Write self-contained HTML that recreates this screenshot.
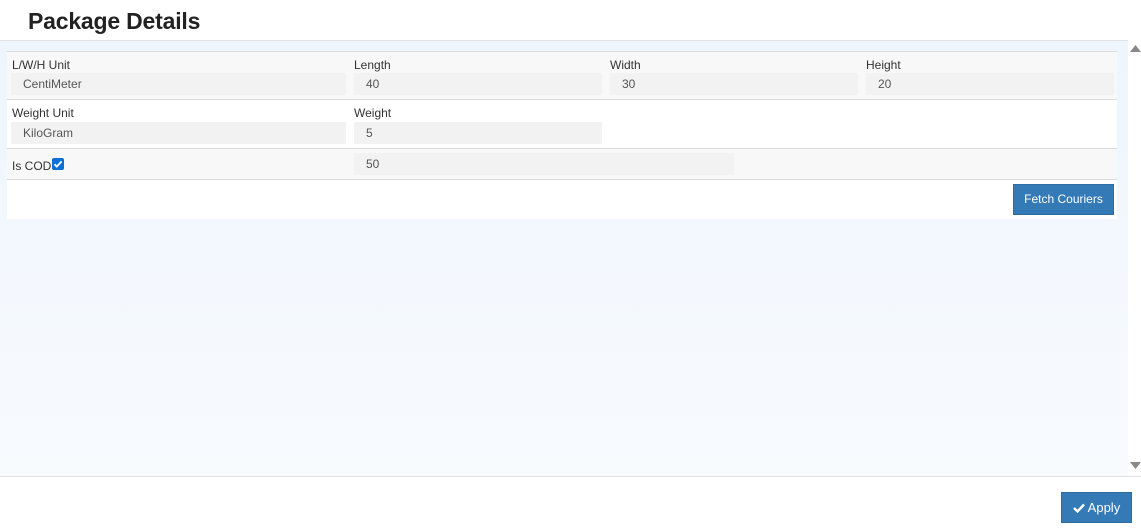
<!DOCTYPE html>
<html><head><style>
*{box-sizing:border-box;margin:0;padding:0}
body{width:1141px;height:531px;position:relative;background:#fff;font-family:"Liberation Sans",sans-serif;font-size:12px;color:#333;overflow:hidden}
.a{position:absolute}
h1{position:absolute;left:28px;top:8px;font-size:23px;font-weight:bold;color:#222;letter-spacing:-0.2px}
.scroll{left:0;top:40px;width:1128px;height:436px;border-top:1px solid #e3e3e3;background:linear-gradient(#eef5fd,#f8fbfe)}
.row{left:7px;width:1110px}
.lbl{position:absolute;font-size:12px;color:#333}
.inp{position:absolute;height:22px;background:#f2f2f2;color:#555;padding-left:12px;line-height:23px}
.btn{position:absolute;background:#337ab7;border:1px solid #2e6da4;color:#fff;text-align:center;font-size:12px}
</style></head><body>
<h1>Package Details</h1>
<div class="a scroll"></div>
<div class="a row" style="top:51px;height:48px;background:#f8f8f8;border-top:1px solid #dcdcdc"></div>
<div class="a row" style="top:99px;height:49px;background:#fff;border-top:1px solid #dcdcdc"></div>
<div class="a row" style="top:148px;height:31px;background:#f8f8f8;border-top:1px solid #dcdcdc"></div>
<div class="a row" style="top:179px;height:40px;background:#fff;border-top:1px solid #dcdcdc"></div>

<div class="lbl" style="left:12px;top:58px">L/W/H Unit</div>
<div class="inp" style="left:11px;top:73px;width:335px">CentiMeter</div>
<div class="lbl" style="left:354px;top:58px">Length</div>
<div class="inp" style="left:354px;top:73px;width:248px">40</div>
<div class="lbl" style="left:610px;top:58px">Width</div>
<div class="inp" style="left:610px;top:73px;width:248px">30</div>
<div class="lbl" style="left:866px;top:58px">Height</div>
<div class="inp" style="left:866px;top:73px;width:248px">20</div>

<div class="lbl" style="left:12px;top:106px">Weight Unit</div>
<div class="inp" style="left:11px;top:122px;width:335px">KiloGram</div>
<div class="lbl" style="left:354px;top:106px">Weight</div>
<div class="inp" style="left:354px;top:122px;width:248px">5</div>

<div class="lbl" style="left:12px;top:159px">Is COD</div>
<svg class="a" style="left:52px;top:158px" width="12" height="12" viewBox="0 0 12 12"><rect width="12" height="12" rx="2" fill="#0b6fd6"/><path d="M2.5 6.3l2.3 2.3L9.6 3.4" stroke="#fff" stroke-width="1.8" fill="none"/></svg>
<div class="inp" style="left:354px;top:153px;width:380px">50</div>

<div class="btn" style="left:1013px;top:184px;width:101px;height:31px;line-height:29px">Fetch Couriers</div>

<svg class="a" style="left:1130px;top:44px" width="11" height="9"><path d="M0 8L5.5 1L11 8Z" fill="#888"/></svg>
<svg class="a" style="left:1130px;top:461px" width="11" height="9"><path d="M0 1L5.5 8L11 1Z" fill="#888"/></svg>

<div class="a" style="left:0;top:476px;width:1141px;height:1px;background:#e3e3e3"></div>
<div class="btn" style="left:1061px;top:492px;width:71px;height:31px;line-height:29px;font-size:13px"><svg width="12" height="10" viewBox="0 0 12 10" style="vertical-align:-1px"><path d="M1 5l3.5 3.5L11 1.5" stroke="#fff" stroke-width="2.4" fill="none"/></svg> Apply</div>
</body></html>
